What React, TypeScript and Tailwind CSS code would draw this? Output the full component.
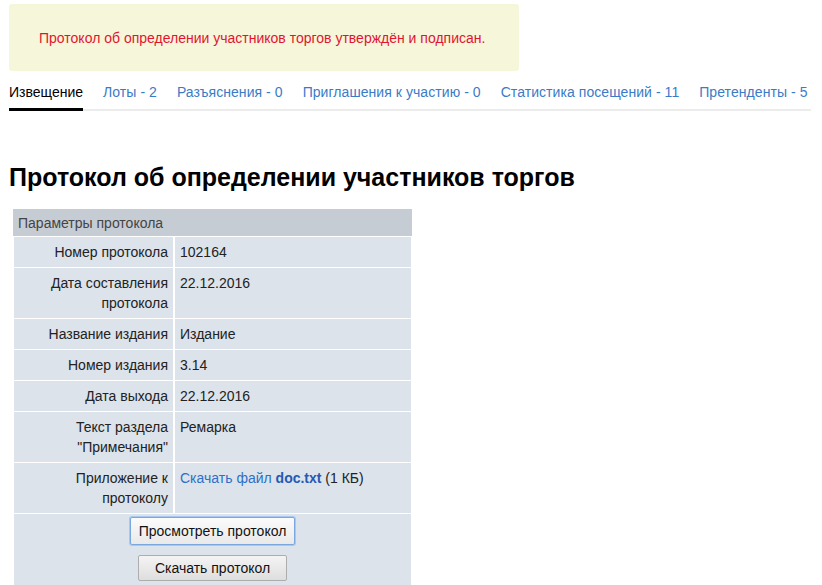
const tabs = [
  { label: "Извещение", active: true },
  { label: "Лоты - 2" },
  { label: "Разъяснения - 0" },
  { label: "Приглашения к участию - 0" },
  { label: "Статистика посещений - 11" },
  { label: "Претенденты - 5" },
];

type Row = { label: React.ReactNode; value: React.ReactNode };

const rows: Row[] = [
  { label: "Номер протокола", value: "102164" },
  { label: <>Дата составления<br />протокола</>, value: "22.12.2016" },
  { label: "Название издания", value: "Издание" },
  { label: "Номер издания", value: "3.14" },
  { label: "Дата выхода", value: "22.12.2016" },
  { label: <>Текст раздела<br />"Примечания"</>, value: "Ремарка" },
  {
    label: <>Приложение к<br />протоколу</>,
    value: (
      <>
        <a href="#" className="text-[#2f6fc7]">Скачать файл <b className="text-[#2559b3]">doc.txt</b></a> (1 КБ)
      </>
    ),
  },
];

export default function App() {
  return (
    <div className="min-h-[585px] bg-white text-[14px] leading-5 text-[#222]" style={{ fontFamily: '"Liberation Sans", Arial, sans-serif' }}>
      <div className="px-[9px] pt-[4px]">
        <div className="w-[510px] h-[67px] rounded-[3px] bg-[#f6f6da] flex items-center pl-[30px] text-[#e3142f]">
          Протокол об определении участников торгов утверждён и подписан.
        </div>

        <ul className="mt-[11px] flex gap-5 border-b-[2px] border-[#ececec] w-[802px] whitespace-nowrap">
          {tabs.map((t) => (
            <li key={t.label} className={t.active ? "shrink-0 pb-[6px] -mb-[2px] border-b-[3px] border-black text-black" : "shrink-0 pb-[6px] text-[#3a7bc7] tracking-[0.06px]"}>
              {t.label}
            </li>
          ))}
        </ul>

        <h1 className="mt-[52px] text-[25px] leading-7 font-bold text-black">Протокол об определении участников торгов</h1>

        <div className="mt-[18px] ml-[4px] w-[399px] bg-white flex flex-col gap-[1px]">
          <div className="h-[27px] bg-[#c6ccd4] text-[#444] px-[5px] flex items-center">Параметры протокола</div>
          {rows.map((r, i) => (
            <div key={i} className="grid grid-cols-[159px_1fr] gap-[2px] mx-[1px]">
              <div className="bg-[#dce3eb] text-right pr-[5px] py-[5px]">{r.label}</div>
              <div className="bg-[#dce3eb] pl-[5px] py-[5px]">{r.value}</div>
            </div>
          ))}
          <div className="mx-[1px] bg-[#dce3eb] flex flex-col items-center pt-[3px] pb-[4px] gap-[10px]">
            <button className="h-[28px] px-[8px] rounded-[2px] border border-[#7aa7e0] bg-gradient-to-b from-[#fbfbfb] to-[#e9e9e9] text-[#111] ring-1 ring-[#a9c8ef]">
              Просмотреть протокол
            </button>
            <button className="h-[26px] px-[16px] rounded-[2px] border border-[#adadad] bg-gradient-to-b from-[#f4f4f4] to-[#dedede] text-[#111]">
              Скачать протокол
            </button>
          </div>
        </div>
      </div>
    </div>
  );
}
